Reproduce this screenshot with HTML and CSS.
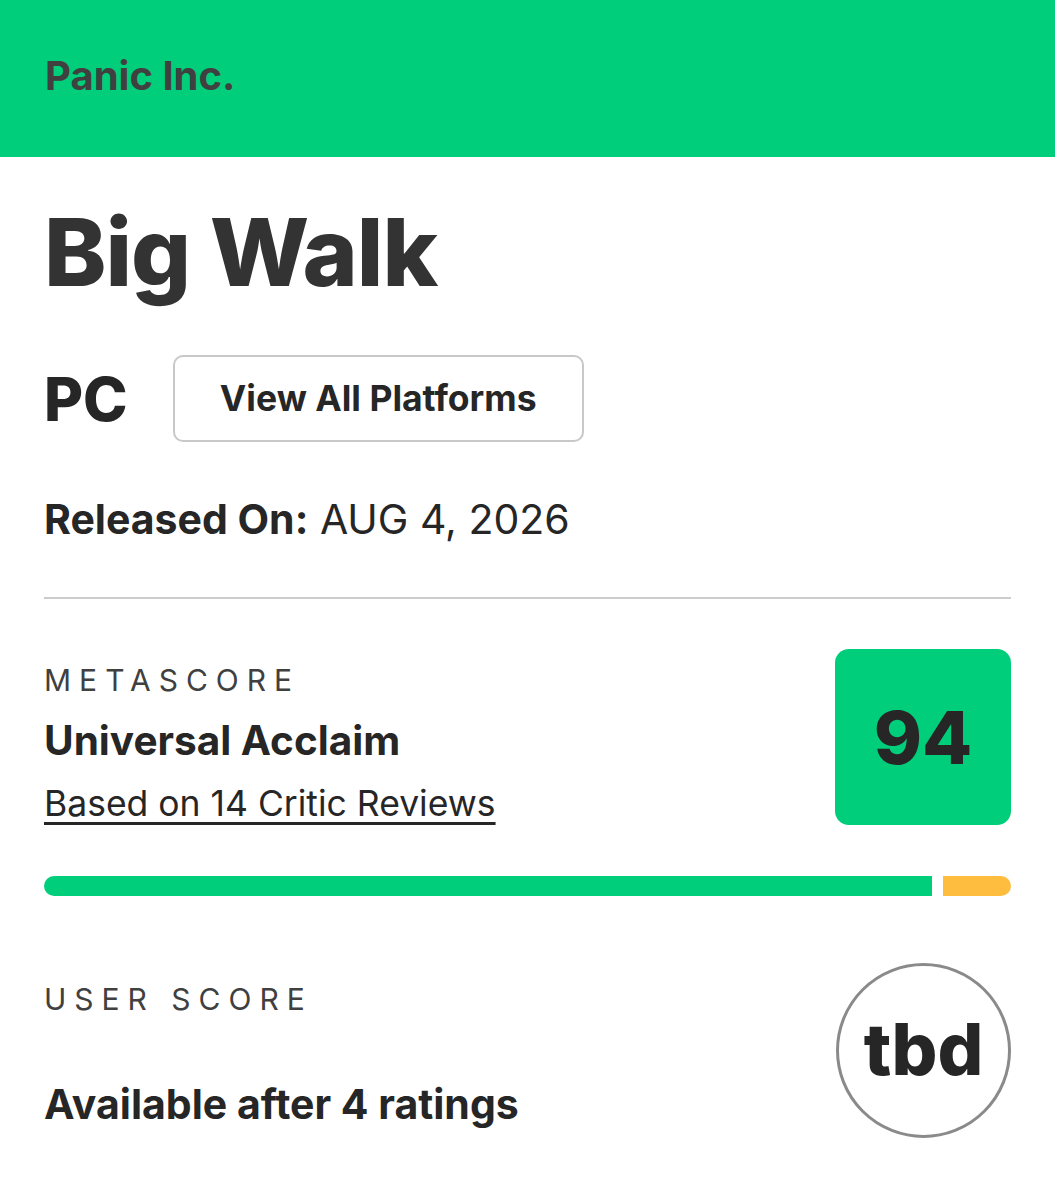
FILE: index.html
```html
<!DOCTYPE html>
<html lang="en">
<head>
<meta charset="utf-8">
<title>Big Walk</title>
<link rel="stylesheet" href="styles.css">
</head>
<body>
<header class="topbar">
  <span class="publisher">Panic Inc.</span>
</header>
<main class="content">
  <h1 class="title">Big Walk</h1>
  <div class="platform-row">
    <span class="platform">PC</span>
    <button class="platforms-btn">View All Platforms</button>
  </div>
  <p class="release"><strong>Released On:</strong> AUG 4, 2026</p>
  <hr class="divider">
  <section class="score-row meta">
    <div class="score-info">
      <div class="label">METASCORE</div>
      <div class="verdict">Universal Acclaim</div>
      <a class="reviews" href="#">Based on 14 Critic Reviews</a>
    </div>
    <div class="metabox">94</div>
  </section>
  <div class="bar">
    <span class="bar-pos"></span>
    <span class="bar-mix"></span>
  </div>
  <section class="score-row user">
    <div class="score-info">
      <div class="label">USER SCORE</div>
      <div class="verdict user-verdict">Available after 4 ratings</div>
    </div>
    <div class="userbox">tbd</div>
  </section>
</main>
</body>
</html>
```

FILE: styles.css
```css
* { box-sizing: border-box; }
html, body { margin: 0; padding: 0; background: #fff; }
body {
  font-family: Inter, "Noto Sans", "Liberation Sans", sans-serif;
  color: #262626;
}
.topbar {
  height: 157px;
  background: #00ce7a;
  display: flex;
  align-items: center;
  padding: 0 0 5px 45px;
}
.publisher {
  font-size: 40px;
  font-weight: 700;
  color: #404040;
  line-height: 1;
}
.content {
  padding: 0 44px;
}
.title {
  margin: 0;
  padding-top: 48px;
  font-size: 94px;
  font-weight: 800;
  line-height: 1;
  color: #333;
  letter-spacing: -1px;
}
.platform-row {
  display: flex;
  align-items: center;
  gap: 45px;
  margin-top: 56px;
}
.platform {
  font-size: 60px;
  font-weight: 800;
  line-height: 1;
  color: #262626;
}
.platforms-btn {
  width: 411px;
  height: 87px;
  border: 2px solid #c8c8c8;
  border-radius: 10px;
  background: #fff;
  font-family: inherit;
  font-size: 35.5px;
  font-weight: 700;
  color: #262626;
  padding: 0;
}
.release {
  margin: 57px 0 0;
  font-size: 41px;
  line-height: 1;
  color: #262626;
}
.release strong { font-weight: 700; }
.divider {
  margin: 57px 0 0;
  border: 0;
  height: 2px;
  background: #cccccc;
}
.score-row {
  display: flex;
  justify-content: space-between;
  align-items: flex-start;
}
.meta { margin-top: 50px; }
.label {
  font-size: 30px;
  font-weight: 400;
  letter-spacing: 8px;
  line-height: 1;
  color: #404040;
}
.meta .label { margin-top: 16px; }
.verdict {
  margin-top: 26px;
  font-size: 40.5px;
  font-weight: 700;
  line-height: 1;
  color: #262626;
}
.reviews {
  display: block;
  margin-top: 24px;
  font-size: 35.5px;
  line-height: 1;
  color: #262626;
  text-decoration: underline;
  text-decoration-thickness: 3px;
  text-underline-offset: 6px;
}
.metabox {
  flex: none;
  width: 176px;
  height: 176px;
  border-radius: 14px;
  background: #00ce7a;
  display: flex;
  align-items: center;
  justify-content: center;
  font-size: 73px;
  font-weight: 800;
  color: #262626;
}
.bar {
  display: flex;
  gap: 11px;
  height: 20px;
  margin-top: 51px;
}
.bar-pos {
  flex: 888 0 0;
  background: #00ce7a;
  border-radius: 10px 0 0 10px;
}
.bar-mix {
  flex: 68 0 0;
  background: #ffbd3f;
  border-radius: 0 10px 10px 0;
}
.user { margin-top: 67px; }
.user .label { margin-top: 21px; }
.user-verdict { margin-top: 70px; font-size: 41px; }
.userbox {
  flex: none;
  width: 175px;
  height: 175px;
  border: 3px solid #8a8a8a;
  border-radius: 50%;
  display: flex;
  align-items: center;
  justify-content: center;
  font-size: 72px;
  font-weight: 800;
  color: #262626;
  padding-bottom: 4px;
}
```
